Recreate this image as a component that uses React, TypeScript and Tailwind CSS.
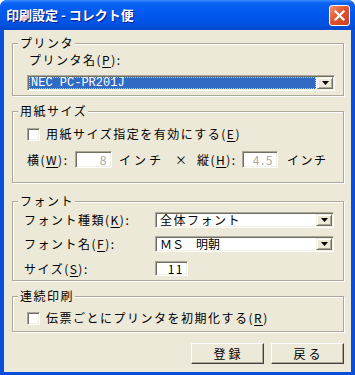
import type { ReactNode } from "react";

const jp = "font-['Noto_Sans_CJK_JP','Noto_Sans',sans-serif]";

function U({ children }: { children: ReactNode }) {
  return <span className="underline underline-offset-[2px]">{children}</span>;
}

function Group({ title, className, children }: { title: string; className: string; children: ReactNode }) {
  return (
    <div className={`relative border border-[#aca899] shadow-[inset_1px_1px_0_#fff,1px_1px_0_#fff] ${className}`}>
      <span className="absolute left-[5px] -top-[8px] bg-[#ece9d8] pl-[2px] pr-[1px] text-[12px] leading-[14px]">{title}</span>
      {children}
    </div>
  );
}

function Sunken({ className, children }: { className: string; children?: ReactNode }) {
  return (
    <div
      className={`border border-t-[#aca899] border-l-[#aca899] border-r-white border-b-white shadow-[inset_1px_1px_0_#716f64,inset_-1px_-1px_0_#f1efe2] ${className}`}
    >
      {children}
    </div>
  );
}

function Arrow() {
  return (
    <div className="flex h-full w-[16px] shrink-0 items-center justify-center border border-t-[#f1efe2] border-l-[#f1efe2] border-r-[#716f64] border-b-[#716f64] bg-[#ece9d8] shadow-[inset_1px_1px_0_#fff,inset_-1px_-1px_0_#aca899]">
      <svg width="7" height="4" viewBox="0 0 7 4">
        <path d="M0 0h7L3.5 4z" fill="#000" />
      </svg>
    </div>
  );
}

function Combo({ text, className }: { text: string; className: string }) {
  return (
    <Sunken className={`flex items-stretch bg-white p-[1px] ${className}`}>
      <div className="flex flex-1 items-center whitespace-nowrap pl-[3px] text-[12px] leading-[14px]">{text}</div>
      <Arrow />
    </Sunken>
  );
}

function Check() {
  return <Sunken className="h-[13px] w-[13px] shrink-0 bg-white" />;
}

function Button({ children }: { children: ReactNode }) {
  return (
    <button
      type="button"
      className="h-[21px] w-[73px] border border-t-white border-l-white border-r-[#404040] border-b-[#404040] bg-[#ece9d8] pl-[2px] text-[12px] leading-[14px] tracking-[3px] shadow-[inset_-1px_-1px_0_#aca899]"
    >
      {children}
    </button>
  );
}

export default function App() {
  return (
    <div className={`flex h-[375px] w-[355px] flex-col overflow-hidden rounded-t-[7px] bg-[#0a4fdc] text-black ${jp}`}>
      <div className="flex h-[30px] shrink-0 items-center justify-between bg-[linear-gradient(180deg,#3d8eff_0%,#0a62f2_10%,#0058ee_45%,#0053e2_80%,#0048cc_100%)] pl-[6px] pr-[5px]">
        <span className="text-[13px] font-bold leading-[16px] text-white [text-shadow:1px_1px_0_#0a1e8c]">
          印刷設定 - コレクト便
        </span>
        <div className="mt-[1px] flex h-[21px] w-[21px] items-center justify-center rounded-[3px] border border-white bg-[linear-gradient(135deg,#f1936f_0%,#e2542f_45%,#c8401f_100%)]">
          <svg width="11" height="11" viewBox="0 0 11 11">
            <path d="M1.5 1.5l8 8M9.5 1.5l-8 8" stroke="#fff" strokeWidth="2.2" strokeLinecap="square" />
          </svg>
        </div>
      </div>

      <div className="mx-[4px] mb-[3px] flex flex-1 flex-col bg-[#ece9d8] pl-[8px] pr-[7px] pt-[13px] tracking-[1.5px]">
        <Group title="プリンタ" className="h-[53px] pl-[14px]">
          <div className="ml-[2px] mt-[9px] text-[12px] leading-[14px]">
            プリンタ名(<U>P</U>):
          </div>
          <Sunken className="mt-[8px] flex h-[16px] w-[308px] items-stretch bg-white p-[1px]">
            <div className="mr-[1px] flex flex-1 items-center border border-dotted border-[#b9c9ef] bg-[#316ac5] pl-[1px] font-['Liberation_Mono',monospace] text-[12px] leading-[12px] tracking-normal text-white">
              NEC PC-PR201J
            </div>
            <Arrow />
          </Sunken>
        </Group>

        <Group title="用紙サイズ" className="mt-[15px] h-[72px] pl-[14px]">
          <div className="mt-[15px] flex items-center gap-[6px] text-[12px] leading-[14px]">
            <Check />
            <span>
              用紙サイズ指定を有効にする(<U>E</U>)
            </span>
          </div>
          <div className="mt-[10px] flex items-center text-[12px] leading-[14px]">
            <span className="w-[48px] shrink-0">
              横(<U>W</U>):
            </span>
            <Sunken className="flex h-[17px] w-[37px] shrink-0 items-center justify-end bg-white pr-[3px] text-[#aca899]">8</Sunken>
            <span className="ml-[7px] w-[56px] shrink-0 tracking-[3px]">インチ</span>
            <span className="w-[22px] shrink-0">×</span>
            <span className="w-[45px] shrink-0">
              縦(<U>H</U>):
            </span>
            <Sunken className="flex h-[17px] w-[36px] shrink-0 items-center justify-end bg-white pr-[3px] text-[#aca899]">4.5</Sunken>
            <span className="ml-[9px]">インチ</span>
          </div>
        </Group>

        <Group title="フォント" className="mt-[18px] h-[80px] pl-[11px]">
          <div className="mt-[10px] flex items-center text-[12px] leading-[14px]">
            <span className="w-[131px] shrink-0">
              フォント種類(<U>K</U>):
            </span>
            <Combo text="全体フォント" className="h-[16px] w-[179px]" />
          </div>
          <div className="mt-[8px] flex items-center text-[12px] leading-[14px]">
            <span className="w-[131px] shrink-0">
              フォント名(<U>F</U>):
            </span>
            <Combo text="ＭＳ　明朝" className="h-[16px] w-[179px] tracking-normal" />
          </div>
          <div className="mt-[9px] flex items-center text-[12px] leading-[14px]">
            <span className="w-[131px] shrink-0">
              サイズ(<U>S</U>):
            </span>
            <Sunken className="flex h-[15px] w-[33px] items-center justify-end bg-white pr-[3px] leading-[12px]">11</Sunken>
          </div>
        </Group>

        <Group title="連続印刷" className="mt-[15px] h-[36px] pl-[14px]">
          <div className="mt-[14px] flex items-center gap-[6px] text-[12px] leading-[14px]">
            <Check />
            <span>
              伝票ごとにプリンタを初期化する(<U>R</U>)
            </span>
          </div>
        </Group>

        <div className="mt-[11px] flex justify-end gap-[7px]">
          <Button>登録</Button>
          <Button>戻る</Button>
        </div>
      </div>
    </div>
  );
}
